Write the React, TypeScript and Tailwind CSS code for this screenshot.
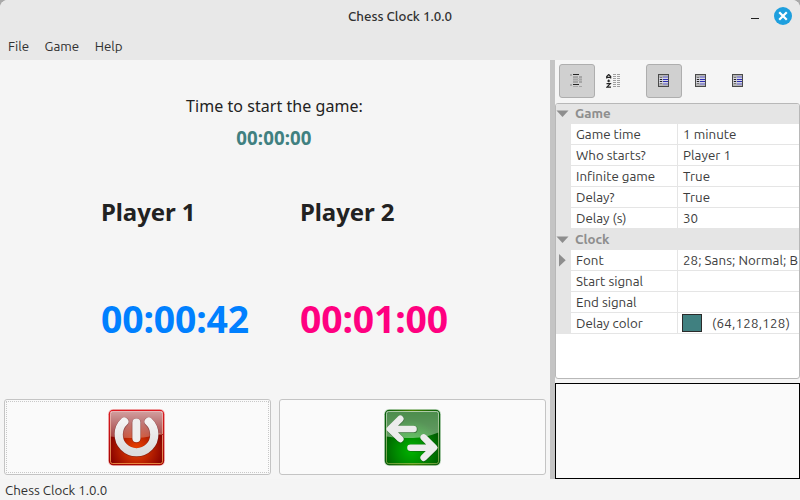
import React from "react";

type Row = { name: string; value?: string; expand?: boolean; swatch?: boolean };

const gameRows: Row[] = [
  { name: "Game time", value: "1 minute" },
  { name: "Who starts?", value: "Player 1" },
  { name: "Infinite game", value: "True" },
  { name: "Delay?", value: "True" },
  { name: "Delay (s)", value: "30" },
];

const clockRows: Row[] = [
  { name: "Font", value: "28; Sans; Normal; B", expand: true },
  { name: "Start signal" },
  { name: "End signal" },
  { name: "Delay color", value: "(64,128,128)", swatch: true },
];

function Category({ title }: { title: string }) {
  return (
    <div className="flex h-[21px] items-start bg-[#e5e5e5] font-bold text-[#8e8e8e]">
      <svg width="19" height="21" viewBox="0 0 19 21" className="shrink-0">
        <path d="M.5 7.5H12.5L6.5 14Z" fill="#8e8e8e" />
      </svg>
      <span className="leading-[22px]">{title}</span>
    </div>
  );
}

function PropertyRow({ row }: { row: Row }) {
  return (
    <div className="flex h-[21px] whitespace-nowrap leading-[22px] text-[#3c3c3c]">
      <div className="w-[15px] shrink-0 bg-[#e5e5e5]">
        {row.expand && (
          <svg width="15" height="21" viewBox="0 0 15 21">
            <path d="M3 4V16.5L9.7 10.2Z" fill="#8e8e8e" />
          </svg>
        )}
      </div>
      <div className="w-[107px] shrink-0 border-r border-b border-[#e5e5e5] pl-[5px]">{row.name}</div>
      <div className={`flex min-w-0 flex-1 items-start border-b border-[#e5e5e5] ${row.swatch ? "pl-1 tracking-[0.25px]" : "pl-[5px] tracking-[0.05px]"}`}>
        {row.swatch && <span className="mt-px mr-[10px] h-[18px] w-5 shrink-0 border border-[#2b2b2b] bg-[#408080]" />}
        {row.value}
      </div>
    </div>
  );
}

function ListIcon() {
  return (
    <svg width="11" height="13" viewBox="0 0 11 13" className="mr-px mb-px" shapeRendering="crispEdges">
      <rect width="11" height="13" fill="#4a4a4a" />
      <rect x="1" y="1" width="9" height="11" fill="#b4b4b4" />
      <rect x="5" y="2" width="5" height="9" fill="#9494cc" />
      <path d="M2 3.5H4M2 9.5H4" stroke="#777" />
      <path d="M2 5.5H4M2 7.5H4" stroke="#222" />
      <path d="M5 5.5H10M5 7.5H10" stroke="#2c2cb0" />
      <path d="M1 4.5H10M1 6.5H10M1 8.5H10" stroke="#d6d6e2" />
    </svg>
  );
}

function CategorizedIcon() {
  return (
    <svg width="14" height="14" viewBox="0 0 14 14" shapeRendering="crispEdges">
      <path d="M0 0H2V2H0ZM0 10H2V12H0Z" fill="#aaa" />
      <path d="M3 2H8V9H3ZM9 2H12V9H9ZM9 12H12V13H9Z" fill="#a6a6a6" />
      <path d="M3 4.5H12M3 6.5H12" stroke="#b8b8b8" />
      <path d="M3 .5H9M3 10.5H9" stroke="#252525" />
      <path d="M3 12.5H8" stroke="#aaa" />
    </svg>
  );
}

function SortIcon() {
  return (
    <svg width="15" height="14" viewBox="0 0 15 14" className="mr-px">
      <path d="M.7 4.5V2.5L2.7.5L4.7 2.5V4.5M.7 3.3H4.7M2.7 5.5V8.3M1.2 7H4.2M.5 9.7H4.3L.9 13.1H5" fill="none" stroke="#222" strokeWidth="1.2" />
      <path d="M7 .5H14M7 2.5H14M7 4.5H14M7 6.5H14M7 8.5H14M7 10.5H14M7 12.5H14" stroke="#a0a0a0" strokeDasharray="3 1" />
    </svg>
  );
}

function PowerIcon() {
  return (
    <svg width="57" height="57" viewBox="0 0 57 57">
      <defs>
        <radialGradient id="red" cx=".5" cy=".72" r=".55">
          <stop offset="0" stopColor="#ed4300" />
          <stop offset=".4" stopColor="#c72a00" />
          <stop offset="1" stopColor="#850000" />
        </radialGradient>
        <linearGradient id="redEdge" x2="0" y2="1">
          <stop offset="0" stopColor="#dc1b22" />
          <stop offset="1" stopColor="#a50400" />
        </linearGradient>
        <linearGradient id="redGloss" x2="0" y2="1">
          <stop offset="0" stopColor="#fff" stopOpacity=".62" />
          <stop offset="1" stopColor="#fff" stopOpacity=".25" />
        </linearGradient>
        <linearGradient id="redRim" x2="0" y2="1">
          <stop offset="0" stopColor="#fff" stopOpacity=".55" />
          <stop offset="1" stopColor="#ffb85a" stopOpacity=".7" />
        </linearGradient>
        <linearGradient id="silver" x2="0" y2="1">
          <stop offset="0" stopColor="#f4f4f4" />
          <stop offset="1" stopColor="#dcdcdc" />
        </linearGradient>
      </defs>
      <rect width="57" height="57" rx="5" fill="#f3c4c4" />
      <rect x=".8" y=".8" width="55.4" height="55.4" rx="4.5" fill="url(#redEdge)" />
      <rect x="2.5" y="2.5" width="52" height="52" rx="2" fill="url(#red)" />
      <path d="M2.5 2.5H54.5V24Q42 28.5 29 29Q14 29.5 2.5 27.5Z" fill="url(#redGloss)" />
      <path d="M50 25H54.5V4.5Q54.5 2.5 52.5 2.5H4.5Q2.5 2.5 2.5 4.5V52.5Q2.5 54.5 4.5 54.5H52.5Q54.5 54.5 54.5 52.5V26" fill="none" stroke="url(#redRim)" />
      <g fill="none" strokeLinecap="round">
        <path d="M16.3 12.8A17.8 17.8 0 1 0 40.7 12.8M28.4 13.8V29.5" stroke="#5c2020" strokeOpacity=".45" strokeWidth="9.3" />
        <path d="M16.3 12.5A17.8 17.8 0 1 0 40.7 12.5" stroke="url(#silver)" strokeWidth="8.2" />
        <path d="M28.4 13.5V29.2" stroke="#efefef" strokeWidth="8" />
      </g>
    </svg>
  );
}

function SwitchIcon() {
  return (
    <svg width="57" height="57" viewBox="0 0 57 57">
      <defs>
        <radialGradient id="green" cx=".48" cy=".75" r=".58">
          <stop offset="0" stopColor="#00b400" />
          <stop offset=".5" stopColor="#008b00" />
          <stop offset="1" stopColor="#005c00" />
        </radialGradient>
        <linearGradient id="greenEdge">
          <stop offset="0" stopColor="#075c0c" />
          <stop offset=".5" stopColor="#437f00" />
          <stop offset="1" stopColor="#075c0c" />
        </linearGradient>
        <linearGradient id="greenGloss" x2="0" y2="1">
          <stop offset="0" stopColor="#fff" stopOpacity=".3" />
          <stop offset="1" stopColor="#fff" stopOpacity=".4" />
        </linearGradient>
        <linearGradient id="greenRim" x2="0" y2="1">
          <stop offset="0" stopColor="#fff" stopOpacity=".6" />
          <stop offset="1" stopColor="#d4d873" stopOpacity=".5" />
        </linearGradient>
      </defs>
      <rect width="57" height="57" rx="5" fill="#c4dcc4" />
      <rect x=".8" y=".8" width="55.4" height="55.4" rx="4.5" fill="url(#greenEdge)" />
      <rect x="2.5" y="2.5" width="52" height="52" rx="2" fill="url(#green)" />
      <path d="M2.5 2.5H54.5V23.5Q42 28.5 29 29Q14 29.5 2.5 27.5Z" fill="url(#greenGloss)" />
      <rect x="2.5" y="2.5" width="52" height="52" rx="2" fill="none" stroke="url(#greenRim)" />
      <g fill="none" strokeLinecap="round" strokeLinejoin="round">
        <path d="M16.5 10.3L6.5 20.4L16.5 30.4M9 20.4H30M40 28.9L50.3 39.2L40 49.2M27 39.2H48" stroke="#1d431d" strokeOpacity=".5" strokeWidth="7.2" />
        <path d="M16.3 9.8L6 20L16.3 30M9 20H29.5M39.7 28.4L50 38.7L39.7 48.7M26.5 38.7H48" stroke="#ececec" strokeWidth="6.6" />
      </g>
      <path d="M2.3 20L14 8.5V31.7ZM53.7 38.7L42 27.2V50.2Z" fill="#ececec" />
    </svg>
  );
}

function ToolButton({ active, children }: { active?: boolean; children: React.ReactNode }) {
  return (
    <div className={`flex h-[34px] w-9 items-center justify-center rounded-[3px] border ${active ? "border-[#aeaeae] bg-[#d0d0d0]" : "border-transparent"}`}>
      {children}
    </div>
  );
}

export default function App() {
  return (
    <div className="h-[500px] w-[800px] overflow-hidden bg-[#a9a9a9] font-['Ubuntu','Noto_Sans',sans-serif] text-[13.33px] text-[#303030]">
      <div className="flex h-full flex-col overflow-hidden rounded-t-[8px] bg-[#f5f5f5]">
        <header className="flex h-8 shrink-0 items-center bg-[#e8e8e8]">
          <div className="w-[100px]" />
          <div className="flex-1 pt-px text-center text-[13.33px] font-medium text-[#303030]">Chess Clock 1.0.0</div>
          <div className="flex w-[100px] items-center justify-end pr-2">
            <div className="mt-[5px] mr-[15px] h-px w-2 bg-[#202020]" />
            <svg width="18" height="18" viewBox="0 0 18 18">
              <circle cx="9" cy="9" r="9" fill="#1e9fde" />
              <path d="M6 6L12 12M12 6L6 12" stroke="#fff" strokeWidth="2.2" strokeLinecap="square" />
            </svg>
          </div>
        </header>
        <nav className="flex h-7 shrink-0 gap-[15.5px] bg-[#e8e8e8] pl-2 leading-[30px]">
          <span>File</span>
          <span>Game</span>
          <span>Help</span>
        </nav>

        <div className="flex h-[419px] shrink-0">
          <main className="flex w-[550px] flex-col font-['Noto_Sans',sans-serif] text-[#222]">
            <div className="flex h-[339px] flex-col pt-[34px]">
              <div className="pr-px text-center text-base leading-6 tracking-[0.05px]">Time to start the game:</div>
              <div className="mt-2 pr-[2px] text-center text-[18.67px] leading-6 font-bold tracking-[0.1px] text-[#408080]">00:00:00</div>
              <div className="mt-[46px] grid grid-cols-[199px_1fr] pl-[101px] font-bold">
                <div className="text-2xl leading-8 tracking-[-0.1px]">Player 1</div>
                <div className="text-2xl leading-8 tracking-[-0.1px]">Player 2</div>
                <div className="mt-[65px] text-[37.33px] leading-[52px] tracking-[-0.15px] text-[#0080ff]">00:00:42</div>
                <div className="mt-[65px] text-[37.33px] leading-[52px] tracking-[-0.15px] text-[#ff0080]">00:01:00</div>
              </div>
            </div>
            <div className="flex gap-2 px-1">
              <button className="h-[76px] w-[267px] rounded-[3px] border border-[#c4c4c4] bg-[#fafafa] p-px">
                <span className="flex h-full items-center justify-center border border-dotted border-[#c8c8c8] pt-px pr-[2px]">
                  <PowerIcon />
                </span>
              </button>
              <button className="flex h-[76px] w-[267px] items-center justify-center rounded-[3px] border border-[#c4c4c4] bg-[#fafafa] pt-px">
                <SwitchIcon />
              </button>
            </div>
          </main>
          <div className="w-[5px] bg-[#c4c4c4]" />
          <aside className="flex w-[245px] flex-col">
            <div className="flex h-[43px] shrink-0 items-start pt-1 pl-1">
              <ToolButton active><CategorizedIcon /></ToolButton>
              <div className="w-px" />
              <ToolButton><SortIcon /></ToolButton>
              <div className="w-[14px]" />
              <ToolButton active><ListIcon /></ToolButton>
              <div className="w-px" />
              <ToolButton><ListIcon /></ToolButton>
              <div className="w-px" />
              <ToolButton><ListIcon /></ToolButton>
            </div>
            <section className="h-[276px] overflow-hidden rounded-[3px] border border-[#b8b8b8] bg-white">
              <div className="-mt-px">
                <Category title="Game" />
                {gameRows.map((r) => <PropertyRow key={r.name} row={r} />)}
                <Category title="Clock" />
                {clockRows.map((r) => <PropertyRow key={r.name} row={r} />)}
              </div>
            </section>
            <div className="mt-1 h-24 border border-black bg-[#fafafa]" />
          </aside>
        </div>
        <footer className="flex-1 bg-[#f4f4f4] pl-[5px] leading-[24px]">Chess Clock 1.0.0</footer>
      </div>
    </div>
  );
}
